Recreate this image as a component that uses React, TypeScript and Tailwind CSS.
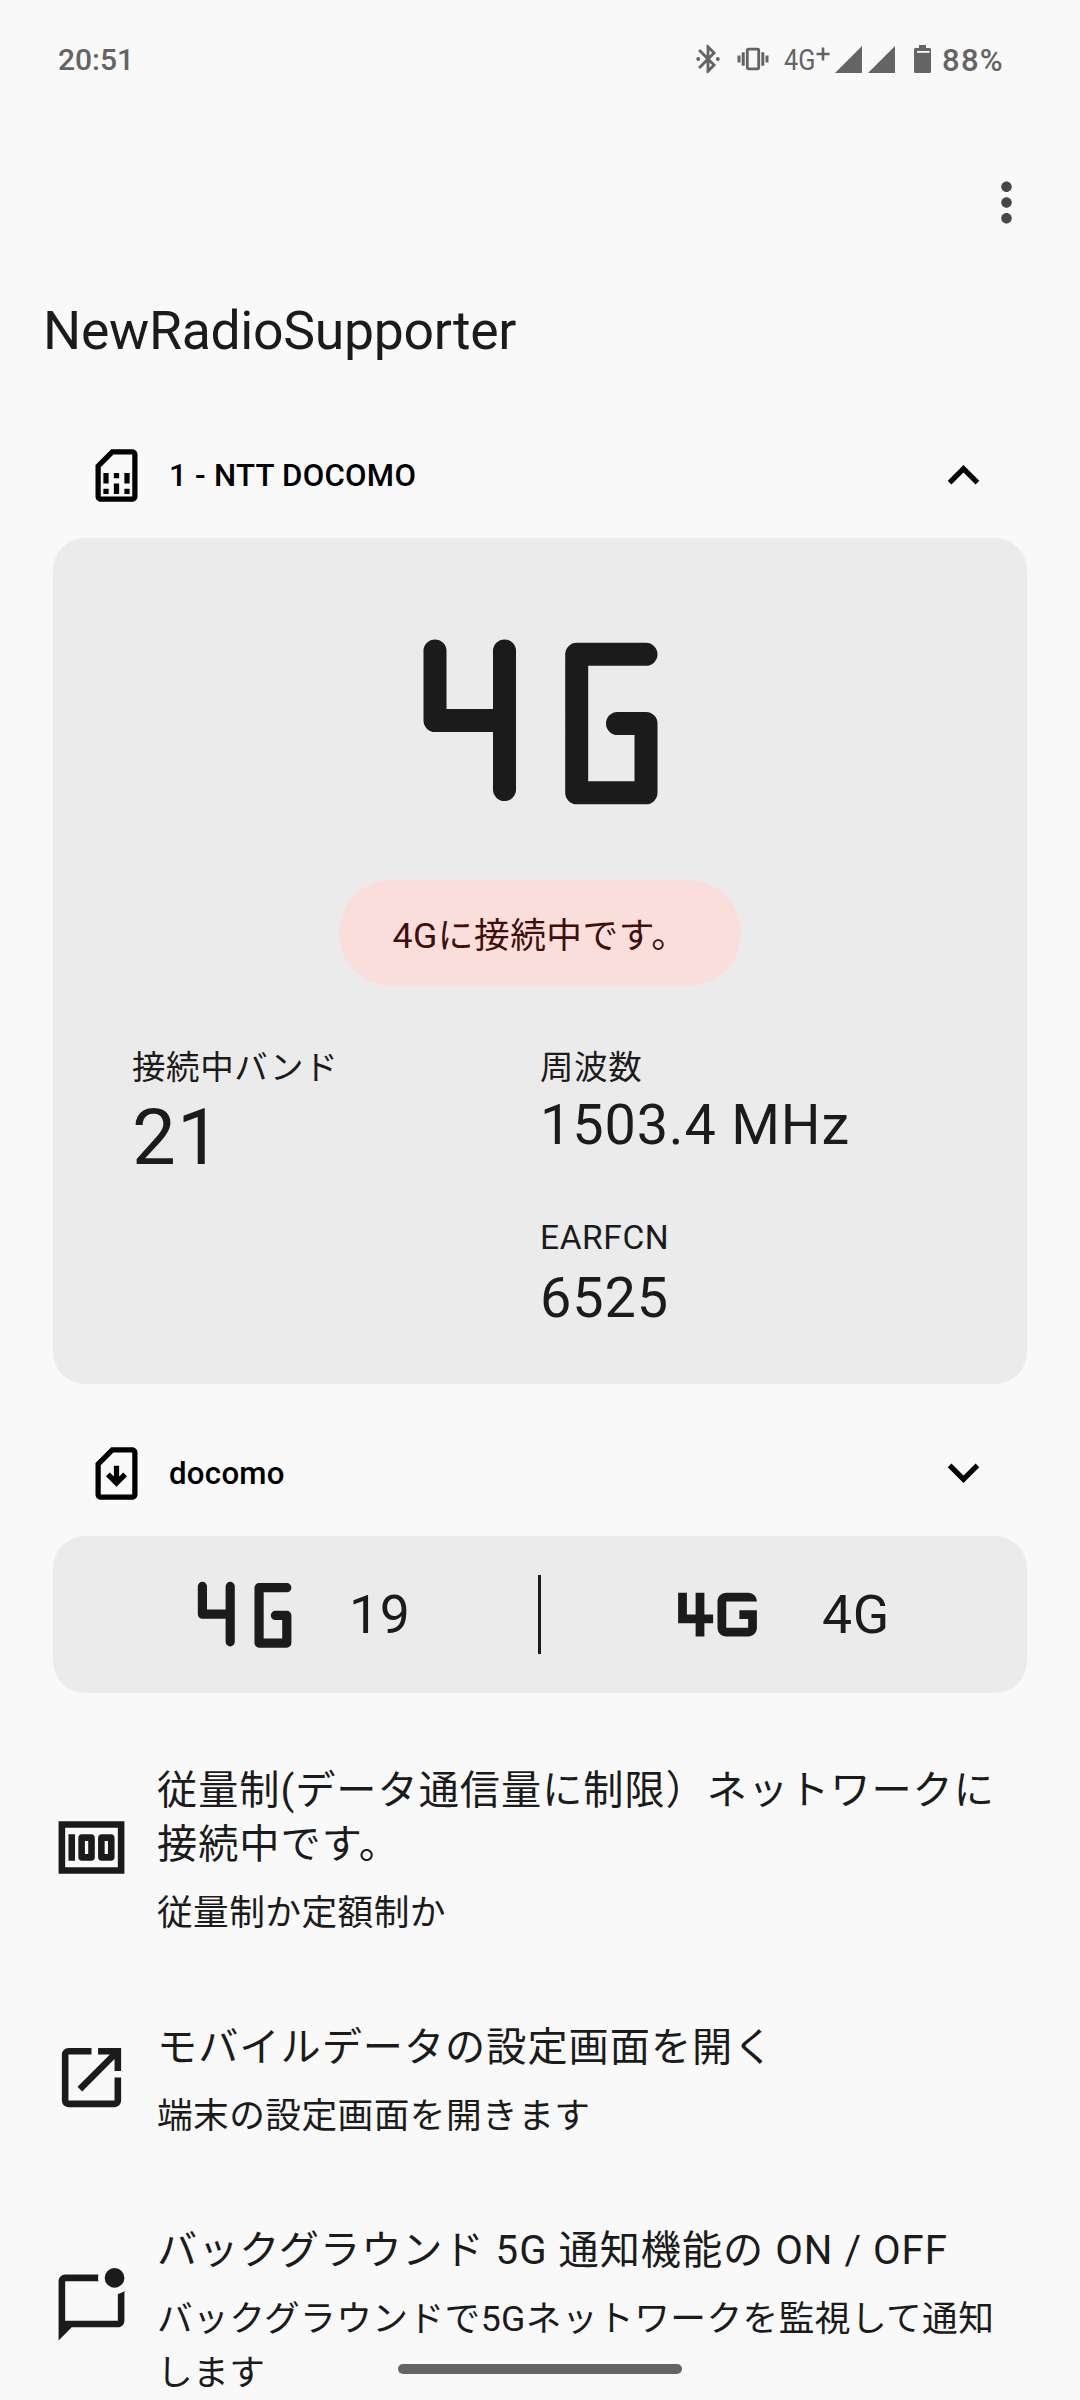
import type { ReactNode } from 'react'
import { clsx } from 'clsx'

interface IconProps {
  className?: string
}

interface MenuItem {
  icon: ReactNode
  title: string
  description: string
}

function Icon({ className, children }: IconProps & { children: ReactNode }) {
  return (
    <svg viewBox="0 0 24 24" fill="currentColor" className={clsx('shrink-0', className)}>
      {children}
    </svg>
  )
}

const simOutline =
  'M18 2h-8L4 8v12c0 1.1.9 2 2 2h12c1.1 0 2-.9 2-2V4c0-1.1-.9-2-2-2zm0 18H6V8.83L10.83 4H18v16z'

function SimCardIcon({ className }: IconProps) {
  return (
    <Icon className={className}>
      <path d={simOutline} />
      <path d="M7 17h2v2H7zM15 17h2v2h-2zM7 11h2v4H7zM11 15h2v4h-2zM11 11h2v2h-2zM15 11h2v4h-2z" />
    </Icon>
  )
}

function SimDownloadIcon({ className }: IconProps) {
  return (
    <Icon className={className}>
      <path d={simOutline} />
      <path d="M12 17l-4-4 1.41-1.41L11 13.17V9h2v4.17l1.59-1.58L16 13l-4 4z" />
    </Icon>
  )
}

function MoneyIcon({ className }: IconProps) {
  return (
    <Icon className={className}>
      <path d="M5 8h2v8H5zM12 8H9c-.55 0-1 .45-1 1v6c0 .55.45 1 1 1h3c.55 0 1-.45 1-1V9c0-.55-.45-1-1-1zm-1 6h-1v-4h1v4zM18 8h-3c-.55 0-1 .45-1 1v6c0 .55.45 1 1 1h3c.55 0 1-.45 1-1V9c0-.55-.45-1-1-1zm-1 6h-1v-4h1v4zM2 4v16h20V4H2zm18 14H4V6h16v12z" />
    </Icon>
  )
}

function OpenInNewIcon({ className }: IconProps) {
  return (
    <Icon className={className}>
      <path d="M19 19H5V5h7V3H5c-1.11 0-2 .9-2 2v14c0 1.1.89 2 2 2h14c1.1 0 2-.9 2-2v-7h-2v7zM14 3v2h3.59l-9.83 9.83 1.41 1.41L19 6.41V10h2V3h-7z" />
    </Icon>
  )
}

function UnreadChatIcon({ className }: IconProps) {
  return (
    <Icon className={className}>
      <path d="M22 6.98V16c0 1.1-.9 2-2 2H6l-4 4V4c0-1.1.9-2 2-2h10.1c-.06.32-.1.66-.1 1s.04.68.1 1H4v12h16V7.9c.74-.15 1.42-.48 2-.92z" />
      <circle cx="19" cy="3" r="3" />
    </Icon>
  )
}

function MobileDataIcon({ className }: IconProps) {
  return (
    <Icon className={className}>
      <path d="M9 7H7v5H5V7H3v7h4v3h2v-3h2v-2H9V7zM17 11v2h2v2h-5V9h7c0-1.1-.9-2-2-2h-5c-1.1 0-2 .9-2 2v6c0 1.1.9 2 2 2h5c1.1 0 2-.9 2-2v-4h-4z" />
    </Icon>
  )
}

// Network generation drawn with rounded strokes
function NetworkIcon({ className }: IconProps) {
  return (
    <svg
      viewBox="0 0 262.5 262.5"
      fill="none"
      stroke="currentColor"
      strokeWidth="23"
      strokeLinecap="round"
      strokeLinejoin="round"
      className={clsx('shrink-0', className)}
    >
      <path d="M26 61V130.5H95.5M95.5 61V199.5" />
      <path d="M237 64.3H167.7V202.8H237V133.5H208.5" />
    </svg>
  )
}

function StatusBar() {
  return (
    <div className="flex h-[118px] items-center pl-[58px] pr-[73px] text-[#646464]">
      <span className="mt-[2px] text-[30px] leading-none font-medium">20:51</span>
      <div className="ml-auto flex items-center">
        <svg viewBox="0 0 24 24" fill="currentColor" className="h-[34px] w-[34px]">
          <path d="M17.71 7.71L12 2h-1v7.59L6.41 5 5 6.41 10.59 12 5 17.59 6.41 19 11 14.41V22h1l5.71-5.71-4.3-4.29 4.3-4.29zM13 5.83l1.88 1.88L13 9.59V5.83zm1.88 10.46L13 18.17v-3.76l1.88 1.88z" />
          <circle cx="5.1" cy="12" r="1.4" />
          <circle cx="18.9" cy="12" r="1.4" />
        </svg>
        <svg viewBox="0 0 32 24" fill="currentColor" className="ml-[12px] h-[24px] w-[32px]">
          <path d="M0.5 8.5h3v7h-3zM4.7 5.2h3v13.6h-3zM24.3 5.2h3v13.6h-3zM28.5 8.5h3v7h-3z" />
          <rect x="10.3" y="2.2" width="11.4" height="19.6" rx="1" fill="none" stroke="currentColor" strokeWidth="2.8" />
        </svg>
        <div className="mt-[2px] ml-[15px] flex w-[46px] items-center leading-none">
          <span className="inline-block origin-left scale-x-[0.84] text-[30px]">4G</span>
        </div>
        <svg viewBox="0 0 14 14" stroke="currentColor" strokeWidth="2.6" className="-ml-[14px] mb-[10px] h-[14px] w-[14px]">
          <path d="M7 .5v13M.5 7h13" />
        </svg>
        <svg viewBox="0 0 60 27" fill="currentColor" className="ml-[5px] h-[27px] w-[60px]">
          <path d="M0 27h27V0zM33 27h27V0z" />
        </svg>
        <svg viewBox="0 0 17 28" className="ml-[19px] h-[28px] w-[17px]">
          <path
            fill="currentColor"
            d="M5 0h7v3h3.5Q17 3 17 4.5v22q0 1.500-1.500 1.500h-14Q0 28 0 26.500v-22Q0 3 1.500 3H5z"
          />
          <path fill="#f9f9f9" d="M3 6h12.500v1.800H3z" />
        </svg>
        <span className="mt-[2px] ml-[11px] w-[65px] text-[31px] leading-none font-medium tracking-[1.3px]">
          88%
        </span>
      </div>
    </div>
  )
}

function TopBar() {
  return (
    <header>
      <div className="flex h-[169px] items-center justify-end pr-[42px]">
        <svg viewBox="0 0 24 24" fill="#474747" className="h-[63px] w-[63px]">
          <path d="M12 8c1.100 0 2-.9 2-2s-.9-2-2-2-2 .9-2 2 .9 2 2 2zm0 2c-1.100 0-2 .9-2 2s.9 2 2 2 2-.9 2-2-.9-2-2-2zm0 6c-1.100 0-2 .9-2 2s.9 2 2 2 2-.9 2-2-.9-2-2-2z" />
        </svg>
      </div>
      <h1 className="h-[125px] pt-[8px] pl-[43px] text-[53.55px] leading-[72px] tracking-[-0.3px]">
        NewRadioSupporter
      </h1>
    </header>
  )
}

function SimHeader({ icon, name, open }: { icon: ReactNode; name: string; open: boolean }) {
  return (
    <button className="flex h-[126px] w-full items-center px-8 text-black">
      {icon}
      <span className="ml-[21px] text-[31.2px] leading-[45px] font-medium tracking-[0.28px]">{name}</span>
      <Icon className={clsx('ml-auto h-[63px] w-[63px]', open ? 'rotate-180' : 'mb-[2px]')}>
        <path d="M16.59 8.59L12 13.17 7.41 8.59 6 10l6 6 6-6z" />
      </Icon>
    </button>
  )
}

function Label({ children }: { children: ReactNode }) {
  return <p className="text-[33.5px] leading-[54px] tracking-[0.6px]">{children}</p>
}

function NetworkCard() {
  return (
    <section className="flex h-[846px] flex-col items-center rounded-[32px] bg-[#ebebeb] pt-[52px]">
      <NetworkIcon className="h-[262.5px] w-[262.5px]" />
      <div className="mt-[27px] flex h-[106px] w-[402px] justify-center rounded-full bg-[#f9dedc] pt-[29px] text-[35.7px] leading-[54px] tracking-[0.5px] text-[#410e0b]">
        4Gに接続中です。
      </div>
      <div className="mt-[55px] grid w-full grid-cols-[408px_1fr] pl-[79px]">
        <div>
          <Label>接続中バンド</Label>
          <p className="text-[78px] leading-[86px] tracking-[1.1px]">21</p>
        </div>
        <div>
          <Label>周波数</Label>
          <p className="text-[55.8px] leading-[60px] tracking-[0.85px]">1503.4 MHz</p>
          <div className="mt-[56px]">
            <Label>EARFCN</Label>
            <p className="mt-[3px] text-[55.8px] leading-[60px] tracking-[0.85px]">6525</p>
          </div>
        </div>
      </div>
    </section>
  )
}

function CompactCard() {
  return (
    <section className="flex h-[157px] items-center rounded-[32px] bg-[#ebebeb] text-[53.55px] leading-[72px]">
      <div className="flex w-[485px] items-center pl-[139px]">
        <NetworkIcon className="h-[105px] w-[105px]" />
        <span className="ml-[52px] tracking-[0.7px]">19</span>
      </div>
      <div className="h-[79px] w-[3px] bg-[#1b1b1b]" />
      <div className="flex items-center pl-[124px]">
        <MobileDataIcon className="h-[105px] w-[105px]" />
        <span className="ml-[52px] tracking-[0.7px]">4G</span>
      </div>
    </section>
  )
}

const menuItems: MenuItem[] = [
  {
    icon: <MoneyIcon className="h-[79px] w-[79px]" />,
    title: '従量制(データ通信量に制限）ネットワークに接続中です。',
    description: '従量制か定額制か',
  },
  {
    icon: <OpenInNewIcon className="h-[79px] w-[79px]" />,
    title: 'モバイルデータの設定画面を開く',
    description: '端末の設定画面を開きます',
  },
  {
    icon: <UnreadChatIcon className="h-[79px] w-[79px]" />,
    title: 'バックグラウンド 5G 通知機能の ON / OFF',
    description: 'バックグラウンドで5Gネットワークを監視して通知します',
  },
]

function MenuRow({ icon, title, description }: MenuItem) {
  return (
    <li className="flex items-center leading-[54px]">
      <div className="mb-[10px] ml-[52px]">{icon}</div>
      <div className="ml-[26px] w-[870px]">
        <p className="text-[40.16px] tracking-[1px]">{title}</p>
        <p className="mt-[14px] text-[35.7px] tracking-[0.43px]">{description}</p>
      </div>
    </li>
  )
}

export default function App() {
  return (
    <div
      lang="ja"
      className="relative h-[2400px] w-[1080px] overflow-hidden bg-[#f9f9f9] font-[Roboto,'Noto_Sans_CJK_JP',sans-serif] text-[#1b1b1b]"
    >
      <StatusBar />
      <TopBar />
      <main className="px-[53px]">
        <SimHeader icon={<SimCardIcon className="h-[63px] w-[63px]" />} name="1 - NTT DOCOMO" open />
        <NetworkCard />
        <div className="mt-[26px]">
          <SimHeader icon={<SimDownloadIcon className="h-[63px] w-[63px]" />} name="docomo" open={false} />
          <CompactCard />
        </div>
      </main>
      <ul className="mt-[71px] flex flex-col gap-[81px]">
        {menuItems.map((item) => (
          <MenuRow key={item.title} {...item} />
        ))}
      </ul>
      {/* Gesture navigation handle */}
      <div className="absolute bottom-[26px] left-[398px] h-[10px] w-[284px] rounded-full bg-[#646464]" />
    </div>
  )
}
